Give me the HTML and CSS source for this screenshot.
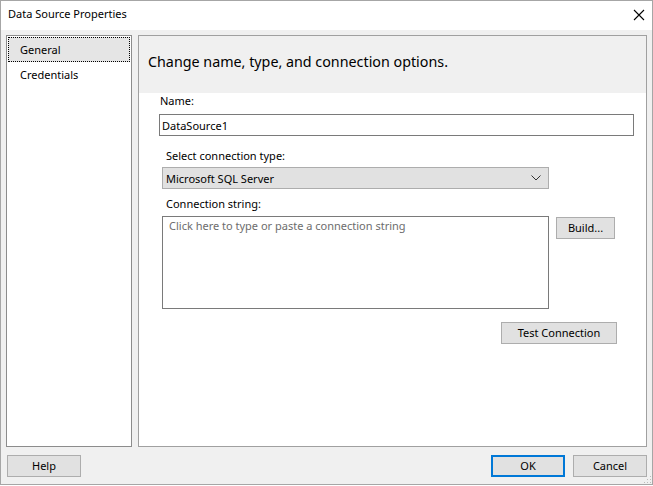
FILE: index.html
```html
<!DOCTYPE html>
<html>
<head>
<meta charset="utf-8">
<link rel="stylesheet" href="styles.css">
</head>
<body>
<div class="window">
  <div class="titlebar">
    <span class="title">Data Source Properties</span>
    <svg class="close" width="12" height="12" viewBox="0 0 12 12"><path d="M1 1 L11 11 M11 1 L1 11" stroke="#000" stroke-width="1.1" fill="none"/></svg>
  </div>
  <div class="main">
    <div class="nav">
      <div class="nav-item selected">General</div>
      <div class="nav-item">Credentials</div>
    </div>
    <div class="panel">
      <div class="panel-head">Change name, type, and connection options.</div>
      <div class="panel-body">
        <div class="label name-label">Name:</div>
        <div class="input name-input">DataSource1</div>
        <div class="label sub-label type-label">Select connection type:</div>
        <div class="select">
          <span>Microsoft SQL Server</span>
          <svg class="chev" width="10" height="6" viewBox="0 0 10 6"><path d="M0.5 0.5 L5 5 L9.5 0.5" stroke="#333" stroke-width="1" fill="none"/></svg>
        </div>
        <div class="label sub-label conn-label">Connection string:</div>
        <div class="conn-row">
          <div class="textarea">Click here to type or paste a connection string</div>
          <div class="btn build">Build...</div>
        </div>
        <div class="test-row">
          <div class="btn test">Test Connection</div>
        </div>
      </div>
    </div>
  </div>
  <div class="footer">
    <div class="btn help">Help</div>
    <div class="spacer"></div>
    <div class="btn ok">OK</div>
    <div class="btn cancel">Cancel</div>
  </div>
  <svg class="grip" width="8" height="8" viewBox="0 0 8 8">
    <rect x="6" y="0" width="1" height="1" fill="#bbb"/>
    <rect x="3" y="3" width="1" height="1" fill="#bbb"/>
    <rect x="6" y="3" width="1" height="1" fill="#bbb"/>
    <rect x="0" y="6" width="1" height="1" fill="#bbb"/>
    <rect x="3" y="6" width="1" height="1" fill="#bbb"/>
    <rect x="6" y="6" width="1" height="1" fill="#bbb"/>
  </svg>
</div>
</body>
</html>
```

FILE: styles.css
```css
html, body {
  margin: 0;
  padding: 0;
  background: #ffffff;
}
body {
  font-family: "Noto Sans", "Open Sans", sans-serif;
  font-size: 11px;
  color: #000;
}
.window {
  position: relative;
  box-sizing: border-box;
  width: 653px;
  height: 485px;
  border: 1px solid #a6a6a6;
  background: #f0f0f0;
  display: flex;
  flex-direction: column;
}
.titlebar {
  height: 29px;
  background: #fff;
  display: flex;
  align-items: center;
  justify-content: space-between;
  padding: 0 6px 0 7px;
  flex: none;
}
.title {
  font-size: 11px;
  line-height: 16px;
  margin-top: -3px;
}
.close {
  margin-top: -2px;
  margin-right: 1px;
}
.main {
  display: flex;
  gap: 6px;
  padding: 5px 5px 0 5px;
  height: 412px;
  flex: none;
}
.nav {
  box-sizing: border-box;
  width: 126px;
  height: 412px;
  background: #fff;
  border: 1px solid #8c8c8c;
  padding-top: 1px;
  flex: none;
}
.nav-item {
  box-sizing: border-box;
  height: 26px;
  margin: 0 1px;
  padding-left: 11px;
  padding-bottom: 1px;
  display: flex;
  align-items: center;
  border: 1px solid transparent;
}
.nav-item.selected {
  height: 25px;
  background: #e5e5e5;
  border: 1px dotted #000;
}
.panel {
  box-sizing: border-box;
  width: 509px;
  height: 412px;
  background: #fff;
  border: 1px solid #a0a0a0;
  flex: none;
}
.panel-head {
  height: 57px;
  background: #f0f0f0;
  font-size: 14.3px;
  padding-left: 9px;
  padding-bottom: 6px;
  display: flex;
  align-items: center;
  box-sizing: border-box;
  line-height: 20px;
}
.panel-body {
  display: flex;
  flex-direction: column;
  align-items: flex-start;
}
.label {
  line-height: 16px;
  height: 16px;
}
.name-label {
  margin-left: 21px;
}
.sub-label {
  margin-left: 27px;
}
.input {
  box-sizing: border-box;
  margin-top: 5px;
  margin-left: 20px;
  width: 475px;
  height: 22px;
  border: 1px solid #7a7a7a;
  padding-left: 2px;
  display: flex;
  align-items: center;
}
.type-label {
  margin-top: 12px;
}
.select {
  box-sizing: border-box;
  margin-top: 3px;
  margin-left: 23px;
  width: 387px;
  height: 22px;
  background: #e1e1e1;
  border: 1px solid #adadad;
  padding: 0 7px 0 3px;
  display: flex;
  align-items: center;
  justify-content: space-between;
}
.conn-label {
  margin-top: 7px;
}
.conn-row {
  display: flex;
  gap: 7px;
  margin-top: 4px;
  margin-left: 23px;
  align-items: flex-start;
}
.textarea {
  box-sizing: border-box;
  width: 387px;
  height: 93px;
  border: 1px solid #7a7a7a;
  padding: 1px 0 0 6px;
  color: #6d6d6d;
  line-height: 16px;
}
.btn {
  box-sizing: border-box;
  height: 22px;
  background: #e1e1e1;
  border: 1px solid #adadad;
  display: flex;
  align-items: center;
  justify-content: center;
  line-height: 16px;
}
.build {
  width: 59px;
  margin-top: 1px;
}
.test-row {
  margin-top: 13px;
  margin-left: 362px;
}
.test {
  width: 116px;
}
.footer {
  display: flex;
  gap: 8px;
  padding: 8px 5px 0 6px;
  flex: none;
}
.spacer {
  flex: 1;
}
.help {
  width: 74px;
}
.ok {
  width: 74px;
  border: 2px solid #0078d7;
}
.cancel {
  width: 74px;
}
.grip {
  position: absolute;
  right: 0;
  bottom: 0;
}
```
